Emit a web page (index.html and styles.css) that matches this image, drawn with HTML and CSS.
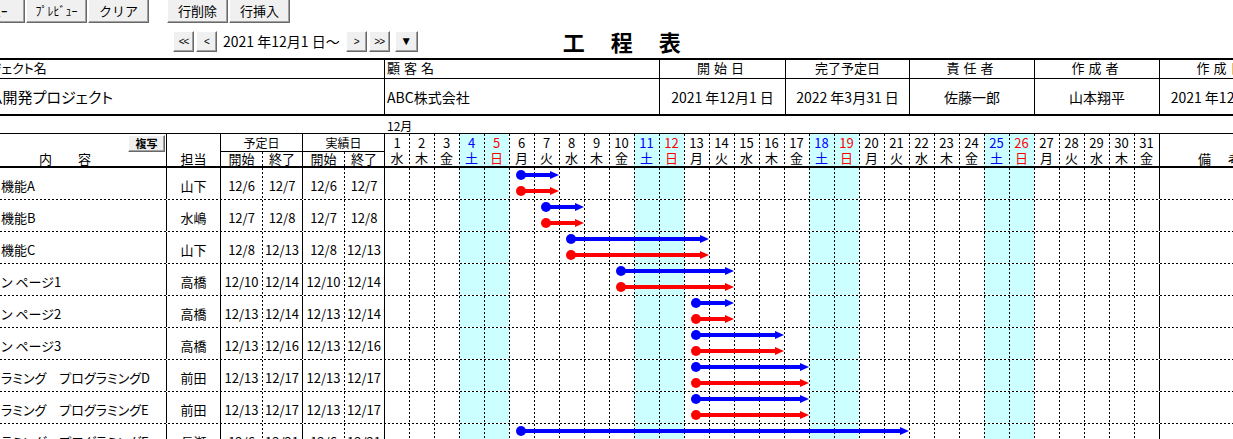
FILE: index.html
```html
<!DOCTYPE html>
<html lang="ja">
<head>
    <meta charset="UTF-8">
    <title>工程表</title>
    <link rel="stylesheet" href="styles.css">
</head>
<body>
    <div class="toolbar">
        <button class="xl-btn cut">ﾒﾆｭｰ</button>
        <button class="xl-btn half">ﾌﾟﾚﾋﾞｭｰ</button>
        <button class="xl-btn">クリア</button>
        <button class="xl-btn group">行削除</button>
        <button class="xl-btn">行挿入</button>
    </div>

    <div class="titlebar">
        <div class="nav">
            <button class="nav-btn">&lt;&lt;</button>
            <button class="nav-btn">&lt;</button>
            <span class="nav-date">2021 年12月1 日～</span>
            <button class="nav-btn">&gt;</button>
            <button class="nav-btn">&gt;&gt;</button>
            <button class="nav-btn drop">▼</button>
        </div>
        <h1 class="title">工程表</h1>
    </div>

    <div class="info">
        <div class="lbl left cut-name">プロジェクト名</div>
        <div class="lbl left spaced">顧客名</div>
        <div class="lbl spaced">開始日</div>
        <div class="lbl">完了予定日</div>
        <div class="lbl spaced">責任者</div>
        <div class="lbl spaced">作成者</div>
        <div class="lbl spaced">作成日</div>
        <div class="val left big cut-project">システム開発プロジェクト</div>
        <div class="val left">ABC株式会社</div>
        <div class="val">2021 年12月1 日</div>
        <div class="val">2022 年3月31 日</div>
        <div class="val">佐藤一郎</div>
        <div class="val">山本翔平</div>
        <div class="val">2021 年12月1 日</div>
    </div>

    <div class="month">12月</div>

    <div class="gantt">
        <div class="gantt-head" id="ganttHead">
            <div class="h-content">
                <button class="copy-btn">複写</button>
                <span>内　　容</span>
            </div>
            <div class="h-who sl">担当</div>
            <div class="h-group sl" style="grid-column: 3 / 5;">予定日</div>
            <div class="h-sub sl">開始</div>
            <div class="h-sub dl">終了</div>
            <div class="h-group sl" style="grid-column: 5 / 7;">実績日</div>
            <div class="h-sub sl">開始</div>
            <div class="h-sub dl">終了</div>
        </div>
        <div id="ganttBody"></div>
    </div>

    <script>
        const weekdays = ['水', '木', '金', '土', '日', '月', '火'];

        const tasks = [
            ['機能A', '山下', '12/6', '12/7', '12/6', '12/7', 6, 7, 6, 7],
            ['機能B', '水嶋', '12/7', '12/8', '12/7', '12/8', 7, 8, 7, 8],
            ['機能C', '山下', '12/8', '12/13', '12/8', '12/13', 8, 13, 8, 13],
            ['ン ページ1', '高橋', '12/10', '12/14', '12/10', '12/14', 10, 14, 10, 14],
            ['ン ページ2', '高橋', '12/13', '12/14', '12/13', '12/14', 13, 14, 13, 14],
            ['ン ページ3', '高橋', '12/13', '12/16', '12/13', '12/16', 13, 16, 13, 16],
            ['ラミング　プログラミングD', '前田', '12/13', '12/17', '12/13', '12/17', 13, 17, 13, 17],
            ['ラミング　プログラミングE', '前田', '12/13', '12/17', '12/13', '12/17', 13, 17, 13, 17],
            ['ラミング　プログラミングF', '長瀬', '12/6', '12/21', '12/6', '12/21', 6, 21, 6, 21]
        ];

        function dayClass(d) {
            const w = weekdays[(d - 1) % 7];
            let cls = d === 1 ? ' sl' : ' dl';
            if (w === '土') cls += ' sat';
            if (w === '日') cls += ' sun';
            return cls;
        }

        // ヘッダー（日付）
        let head = '';
        for (let d = 1; d <= 31; d++) {
            head += `<div class="h-day${dayClass(d)}"><span>${d}</span><span>${weekdays[(d - 1) % 7]}</span></div>`;
        }
        head += '<div class="h-note sl">備　考</div>';
        document.getElementById('ganttHead').insertAdjacentHTML('beforeend', head);

        function bar(start, end, kind) {
            const left = (start - 1) * 25 + 7;
            const width = end * 25 - left;
            return `<div class="bar ${kind}" style="left:${left}px;width:${width}px"></div>`;
        }

        // 行
        let body = '';
        tasks.forEach(t => {
            let cells = '';
            for (let d = 1; d <= 31; d++) {
                cells += `<div class="day${dayClass(d)}"></div>`;
            }
            body += `
                <div class="g-row">
                    <div class="c-name">${t[0]}</div>
                    <div class="c-mid sl">${t[1]}</div>
                    <div class="c-mid sl">${t[2]}</div>
                    <div class="c-mid dl">${t[3]}</div>
                    <div class="c-mid sl">${t[4]}</div>
                    <div class="c-mid dl">${t[5]}</div>
                    <div class="days">${cells}${bar(t[6], t[7], 'plan')}${bar(t[8], t[9], 'act')}</div>
                    <div class="c-note sl"></div>
                </div>`;
        });
        document.getElementById('ganttBody').innerHTML = body;
    </script>
</body>
</html>
```

FILE: styles.css
```css
* {
    box-sizing: border-box;
}
html, body {
    margin: 0;
    overflow: hidden;
}
body {
    width: 1233px;
    height: 439px;
    background: #fff;
    color: #000;
    font-family: "Noto Sans CJK JP", "Noto Sans", sans-serif;
    font-size: 13px;
    font-feature-settings: "palt";
}

/* ボタン */
.toolbar {
    display: flex;
    height: 24px;
}
.xl-btn {
    width: 61px;
    height: 25px;
    margin: -2px 1px 0 0;
    padding: 0;
    font-family: inherit;
    font-size: 13px;
    color: #000;
    background: #f0f0f0;
    border: 1px solid;
    border-color: #fff #696969 #696969 #fff;
    box-shadow: inset -1px -1px 0 #a0a0a0;
}
.xl-btn.cut {
    margin-left: -36px;
}
.xl-btn.half {
    font-size: 12px;
}
.xl-btn.group {
    margin-left: 17px;
}

.titlebar {
    display: flex;
    align-items: center;
    height: 34px;
    padding-left: 173px;
}
.nav {
    display: flex;
    align-items: center;
    gap: 2px;
}
.nav-btn {
    width: 21px;
    height: 21px;
    padding: 0;
    font-family: "Liberation Sans", sans-serif;
    font-size: 10px;
    letter-spacing: -1px;
    background: #f0f0f0;
    border: 1px solid;
    border-color: #fff #696969 #696969 #fff;
    box-shadow: inset -1px -1px 0 #a0a0a0;
}
.nav-btn.drop {
    width: 23px;
    margin-left: 3px;
    font-size: 12px;
    letter-spacing: 0;
}
.nav-date {
    margin: 0 4px;
    font-size: 14px;
}
.title {
    margin: 0 0 0 145px;
    font-size: 22px;
    font-weight: 700;
    letter-spacing: 26px;
}

/* 案件情報 */
.info {
    display: grid;
    grid-template-columns: 384px 275px 126px 124px 125px 125px 125px;
    grid-template-rows: 19px 35px;
    width: 1300px;
    border-top: 2px solid #000;
    border-bottom: 2px solid #000;
}
.info > div {
    display: flex;
    justify-content: center;
    white-space: nowrap;
    overflow: hidden;
    border-left: 1px solid #000;
}
.info > div:nth-child(7n+1) {
    border-left: none;
}
.info .lbl {
    align-items: flex-end;
    padding-bottom: 1px;
    border-bottom: 1px solid #000;
}
.info .val {
    align-items: center;
    font-size: 14px;
}
.info .left {
    justify-content: flex-start;
    padding-left: 2px;
}
.info .spaced {
    letter-spacing: 4px;
}
.info .big {
    font-size: 15px;
}
.info .cut-name {
    text-indent: -38px;
}
.info .cut-project {
    text-indent: -54px;
}

.month {
    height: 17px;
    padding-left: 387px;
    font-size: 12px;
    line-height: 20px;
}

/* 工程表 */
.gantt {
    width: 1300px;
}
.gantt-head,
.g-row {
    display: grid;
    grid-template-columns: 166px 54px 42px 40px 42px 40px 775px 1fr;
}
.gantt-head {
    grid-template-columns: 166px 54px 42px 40px 42px 40px repeat(31, 25px) 1fr;
    grid-template-rows: 18px 14px;
    border-top: 1px solid #000;
    border-bottom: 2px solid #000;
}
.sl {
    border-left: 1px solid #000;
}
.dl {
    background-image: linear-gradient(#000 50%, transparent 50%);
    background-size: 1px 4px;
    background-repeat: repeat-y;
}
.sat,
.sun {
    background-color: #ccffff;
}
.h-content {
    grid-row: 1 / 3;
    display: flex;
    flex-direction: column;
    align-items: flex-start;
}
.copy-btn {
    align-self: flex-end;
    width: 37px;
    height: 17px;
    margin: 1px 1px 0 0;
    padding: 0;
    font-family: inherit;
    font-size: 11px;
    font-weight: 700;
    line-height: 13px;
    background: #f0f0f0;
    border: 1px solid;
    border-color: #fff #696969 #696969 #fff;
    box-shadow: inset -1px -1px 0 #a0a0a0;
}
.h-content span {
    padding-left: 39px;
    line-height: 14px;
}
.h-who {
    grid-row: 1 / 3;
    display: flex;
    align-items: flex-end;
    justify-content: center;
    line-height: 15px;
}
.h-group {
    grid-row: 1;
    text-align: center;
    font-size: 12px;
    line-height: 17px;
    border-bottom: 1px solid #000;
}
.h-sub {
    grid-row: 2;
    text-align: center;
    line-height: 14px;
}
.h-day {
    grid-row: 1 / 3;
    display: flex;
    flex-direction: column;
    align-items: center;
    padding-top: 1px;
    line-height: 15px;
}
.h-day.sat {
    color: #0000ff;
}
.h-day.sun {
    color: #ff0000;
}
.h-note {
    grid-row: 1 / 3;
    display: flex;
    align-items: flex-end;
    padding-left: 38px;
    line-height: 15px;
    letter-spacing: 2px;
}

.g-row {
    height: 32px;
    padding-bottom: 1px;
    background: linear-gradient(to right, #000 50%, transparent 50%) left bottom / 4px 1px repeat-x;
}
.g-row > div {
    display: flex;
    align-items: center;
    padding-top: 4px;
    white-space: nowrap;
}
.c-name {
    padding-left: 1px;
    overflow: hidden;
}
.c-mid {
    justify-content: center;
}
.g-row > .days {
    display: grid;
    grid-template-columns: repeat(31, 25px);
    align-items: stretch;
    position: relative;
    padding: 0;
}
.bar {
    position: absolute;
    height: 10px;
    background: linear-gradient(currentColor, currentColor) 5px 3px / calc(100% - 13px) 4px no-repeat;
}
.bar.plan {
    top: 2px;
    color: #0000ff;
}
.bar.act {
    top: 18px;
    color: #ff0000;
}
.bar::before {
    content: "";
    position: absolute;
    left: 0;
    top: 0;
    width: 10px;
    height: 10px;
    border-radius: 50%;
    background: currentColor;
}
.bar::after {
    content: "";
    position: absolute;
    right: 0;
    top: 1px;
    border-left: 9px solid currentColor;
    border-top: 4px solid transparent;
    border-bottom: 4px solid transparent;
}
```
